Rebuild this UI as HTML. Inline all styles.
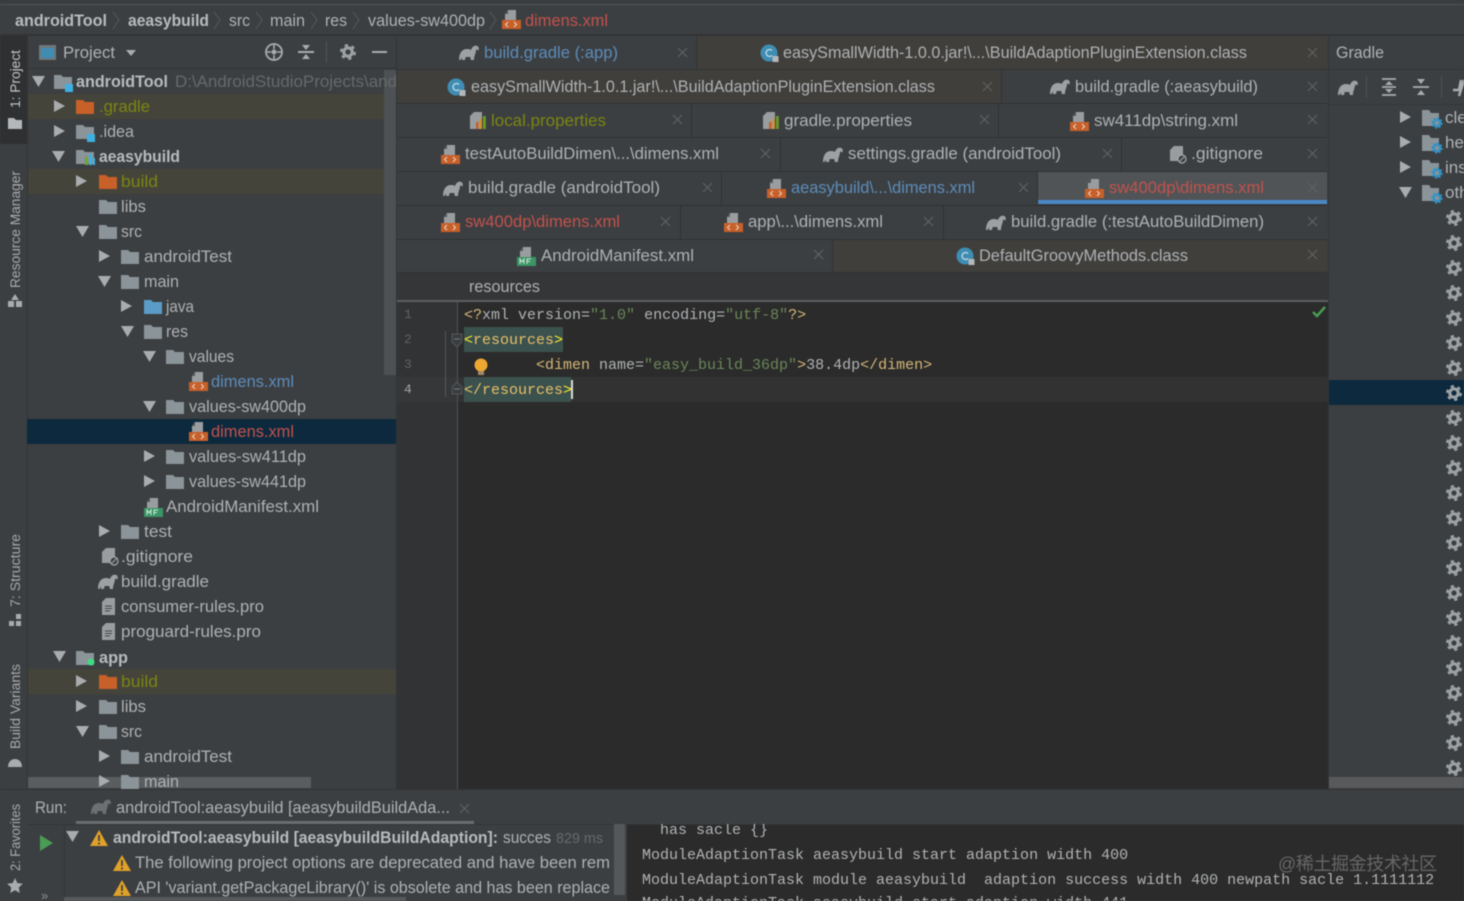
<!DOCTYPE html>
<html lang="en"><head><meta charset="utf-8"><title>Android Studio</title>
<style>
html,body{margin:0;padding:0;background:#3c3f41;width:1464px;height:901px;overflow:hidden}
svg{display:block;filter:blur(.4px)}
text{font-family:"Liberation Sans","Noto Sans CJK SC",sans-serif;font-size:17px;fill:#aeb1b3}
.b{font-weight:bold;fill:#b8bbbd}
.o{fill:#7a8612}.r{fill:#c2524d}.bl{fill:#5c8cba}.d{fill:#66696b}
.m{font-family:"Liberation Mono",monospace;font-size:15px;fill:#b0b2b4}
.v{font-size:13.5px;fill:#a6a9ab}
.n{font-family:"Liberation Mono",monospace;font-size:13px;fill:#5f6264}
</style></head><body>
<svg width="1464" height="901" viewBox="0 0 1464 901" xmlns="http://www.w3.org/2000/svg">
<defs>
<g id="fo"><path d="M0 1h7l2 2h9v12H0z"/></g>
<g id="ar"><path d="M0 0l11 6-11 6z" fill="#a9acae"/></g>
<g id="ad"><path d="M0 0h13l-6.500 11z" fill="#a9acae"/></g>
<g id="el"><path d="M0 15C0 8 3 4 8 4c2 0 3 .4 4 1 1-3 3-4.500 5.500-4.300C19.500 1 20.300 3 19.500 5.500L18 4.500c-.8 0-1 1-1.300 2.500-.4 2.500-1.700 4-1.700 8h-3.200l-.5-3H6.700L6 15H3l-.3-2.500L1.500 15z" fill="#9da1a4"/></g>
<g id="xm"><path d="M6 0h8v10H3V4z" fill="#9a9d9f"/><path d="M6 0v4H3z" fill="#55585a"/><rect x="0" y="10" width="19" height="9" fill="#c8602a"/><path d="M6 12l-2.500 2.500L6 17M12 12l2.500 2.500L12 17" fill="none" stroke="#e9d8c8" stroke-width="1"/></g>
<g id="mf"><path d="M6 0h8v10H3V4z" fill="#9a9d9f"/><path d="M6 0v4H3z" fill="#55585a"/><rect x="0" y="10" width="19" height="9" fill="#3b9566"/><path d="M3 17v-5l2 3 2-3v5M10 17v-5h4M10 14.500h3" fill="none" stroke="#cfe6d8" stroke-width="1"/></g>
<g id="cl"><circle cx="9" cy="9" r="8.500" fill="#3f8db3"/><path d="M12 6.500a3.500 3.500 0 1 0 0 5" fill="none" stroke="#c4dbe6" stroke-width="1.300"/><rect x="12.500" y="12" width="6" height="6" fill="#b5b8ba"/></g>
<g id="pr"><path d="M4 0h8v17H0V4z" fill="#9a9d9f"/><rect x="6" y="10" width="2.500" height="7" fill="#c8602a"/><rect x="9.500" y="7" width="2.500" height="10" fill="#d0902f"/><rect x="13" y="4" width="2.800" height="13" fill="#6e9a2a"/></g>
<g id="gi"><path d="M4 0h9v15H0V4z" fill="#9a9d9f"/><circle cx="12" cy="13" r="4" fill="#3c3f41" stroke="#a5a8aa" stroke-width="1.200"/><path d="M9.500 15.500l5-5" stroke="#a5a8aa"/></g>
<g id="tx"><path d="M4 0h9v17H0V4z" fill="#9a9d9f"/><path d="M3 8h7M3 10.500h7M3 13h5" stroke="#45484a"/></g>
<g id="x"><path d="M0 0l9 9M9 0l-9 9" stroke="#5e6264" stroke-width="1.200" fill="none"/></g>
<g id="ge"><circle cx="8" cy="8" r="4.200" fill="none" stroke="#9ca1a4" stroke-width="3.200"/><circle cx="8" cy="8" r="6.800" fill="none" stroke="#9ca1a4" stroke-width="2.400" stroke-dasharray="3.300 3.820"/></g>
<g id="fg"><path d="M0 0h7l2 3h8v13H0z" fill="#8a9499"/><circle cx="15" cy="13" r="3.300" fill="none" stroke="#3592c4" stroke-width="2.400"/><circle cx="15" cy="13" r="5" fill="none" stroke="#3592c4" stroke-width="1.400" stroke-dasharray="2 1.900"/></g>
<g id="wa"><path d="M9 0l9 16H0z" fill="#dfa129"/><path d="M9 5v6M9 12.500v2" stroke="#3c3f41" stroke-width="1.700"/></g>
<clipPath id="treeclip"><rect x="27" y="70" width="369" height="719"/></clipPath>
<clipPath id="c3"><rect x="64" y="825" width="546" height="76"/></clipPath>
<clipPath id="c4"><rect x="627" y="824" width="837" height="77"/></clipPath>
</defs>

<!-- base -->
<rect width="1464" height="901" fill="#3c3f41"/>
<rect y="0" width="1464" height="4" fill="#3a3c3e"/><rect y="4" width="1464" height="1" fill="#515457"/>
<rect y="34" width="1464" height="2" fill="#323436"/>

<!-- breadcrumb -->
<text class="b" x="15" y="26" textLength="92" lengthAdjust="spacingAndGlyphs">androidTool</text>
<path d="M113 12l6 8-6 9" fill="none" stroke="#56595b"/>
<text class="b" x="128" y="26" textLength="81" lengthAdjust="spacingAndGlyphs">aeasybuild</text>
<path d="M214 12l6 8-6 9" fill="none" stroke="#56595b"/>
<text x="229" y="26" textLength="21" lengthAdjust="spacingAndGlyphs">src</text>
<path d="M256 12l6 8-6 9" fill="none" stroke="#56595b"/>
<text x="270" y="26" textLength="35" lengthAdjust="spacingAndGlyphs">main</text>
<path d="M311 12l6 8-6 9" fill="none" stroke="#56595b"/>
<text x="325" y="26" textLength="22" lengthAdjust="spacingAndGlyphs">res</text>
<path d="M353 12l6 8-6 9" fill="none" stroke="#56595b"/>
<text x="368" y="26" textLength="117" lengthAdjust="spacingAndGlyphs">values-sw400dp</text>
<path d="M490 12l6 8-6 9" fill="none" stroke="#56595b"/>
<use href="#xm" x="502" y="10"/>
<text class="r" x="525" y="26" textLength="83" lengthAdjust="spacingAndGlyphs">dimens.xml</text>

<!-- left tool strip -->
<rect x="0" y="36" width="27" height="108" fill="#2e3032"/>
<rect x="27" y="36" width="1" height="754" fill="#333537"/>
<text class="v" transform="translate(20,108) rotate(-90)" textLength="58" lengthAdjust="spacingAndGlyphs" style="fill:#c4c6c8">1: Project</text>
<path d="M8 118h6l2 2h6v9H8z" fill="#b5b8ba"/>
<text class="v" transform="translate(20,288) rotate(-90)" textLength="117" lengthAdjust="spacingAndGlyphs">Resource Manager</text>
<path d="M15 294l4 6h-8zM8 301h6v6H8zM16 301h6v6h-6z" fill="#a9acae"/>
<text class="v" transform="translate(20,607) rotate(-90)" textLength="73" lengthAdjust="spacingAndGlyphs">7: Structure</text>
<path d="M16 614h5v5h-5zM9 621h5v5H9zM16 621h5v5h-5z" fill="#a9acae"/>
<text class="v" transform="translate(20,749) rotate(-90)" textLength="85" lengthAdjust="spacingAndGlyphs">Build Variants</text>
<path d="M8 767c0-5 3-8 7-8s7 3 7 8z" fill="#a9acae"/>
<text class="v" transform="translate(20,871) rotate(-90)" textLength="67" lengthAdjust="spacingAndGlyphs">2: Favorites</text>
<path d="M15 878l2.300 5 5.500.7-4 3.800 1 5.500-4.800-2.700-4.800 2.700 1-5.500-4-3.800 5.500-.7z" fill="#a9acae"/>

<!-- project header -->
<rect x="39" y="45" width="17" height="15" fill="#6f7679"/><rect x="41" y="48" width="13" height="10" fill="#3f8db3"/>
<text x="63" y="58" textLength="52" lengthAdjust="spacingAndGlyphs">Project</text>
<path d="M126 50h10l-5 6z" fill="#a9acae"/>
<circle cx="274" cy="52" r="8" fill="none" stroke="#a9acae" stroke-width="1.800"/><circle cx="274" cy="52" r="2.500" fill="#a9acae"/><path d="M274 44v5M274 55v5M266 52h5M277 52h5" stroke="#a9acae" stroke-width="1.600"/>
<path d="M298 52h16" stroke="#a9acae" stroke-width="2"/><path d="M302 45h8l-4 5zM302 59h8l-4-5z" fill="#a9acae"/>
<rect x="326" y="41" width="1" height="22" fill="#505356"/>
<use href="#ge" x="340" y="44"/>
<path d="M372 52h15" stroke="#a9acae" stroke-width="2"/>
<rect x="28" y="68" width="368" height="1" fill="#323436"/>

<!-- project tree -->
<g clip-path="url(#treeclip)">
<rect x="28" y="94" width="368" height="25" fill="#45443a"/>
<rect x="28" y="169" width="368" height="25" fill="#45443a"/>
<rect x="28" y="669" width="368" height="25" fill="#45443a"/>
<rect x="27" y="419" width="369" height="25" fill="#0d293e"/>
<rect x="384" y="70" width="12" height="305" fill="#4e5153"/>

<use href="#ad" x="32" y="76"/>
<use href="#fo" x="54" y="74" fill="#8a9499"/><rect x="65" y="84" width="8" height="8" fill="#3fb1e0"/>
<text class="b" x="76" y="87" textLength="92" lengthAdjust="spacingAndGlyphs">androidTool</text>
<text class="d" x="175" y="87" textLength="222" lengthAdjust="spacingAndGlyphs">D:\AndroidStudioProjects\and</text>

<use href="#ar" x="54" y="100"/><use href="#fo" x="76" y="99" fill="#c8602a"/>
<text class="o" x="99" y="112" textLength="51" lengthAdjust="spacingAndGlyphs">.gradle</text>
<use href="#ar" x="54" y="125"/><use href="#fo" x="76" y="124" fill="#8a9499"/><rect x="87" y="134" width="8" height="8" fill="#3fb1e0"/>
<text x="99" y="137" textLength="35" lengthAdjust="spacingAndGlyphs">.idea</text>
<use href="#ad" x="52" y="151"/><use href="#fo" x="76" y="149" fill="#8a9499"/><path d="M85 157h3v8h-3z" fill="#6fa53a"/><path d="M89 154h3v11h-3z" fill="#3fb1e0"/><path d="M93 158h2v7h-2z" fill="#3fb1e0"/>
<text class="b" x="99" y="162" textLength="81" lengthAdjust="spacingAndGlyphs">aeasybuild</text>
<use href="#ar" x="76" y="175"/><use href="#fo" x="99" y="174" fill="#c8602a"/>
<text class="o" x="121" y="187" textLength="37" lengthAdjust="spacingAndGlyphs">build</text>
<use href="#fo" x="99" y="199" fill="#8a9499"/>
<text x="121" y="212" textLength="25" lengthAdjust="spacingAndGlyphs">libs</text>
<use href="#ad" x="76" y="226"/><use href="#fo" x="99" y="224" fill="#8a9499"/>
<text x="121" y="237" textLength="21" lengthAdjust="spacingAndGlyphs">src</text>
<use href="#ar" x="99" y="250"/><use href="#fo" x="121" y="249" fill="#8a9499"/>
<text x="144" y="262" textLength="88" lengthAdjust="spacingAndGlyphs">androidTest</text>
<use href="#ad" x="98" y="276"/><use href="#fo" x="121" y="274" fill="#8a9499"/>
<text x="144" y="287" textLength="35" lengthAdjust="spacingAndGlyphs">main</text>
<use href="#ar" x="121" y="300"/><use href="#fo" x="144" y="299" fill="#5b9bc8"/>
<text x="166" y="312" textLength="28" lengthAdjust="spacingAndGlyphs">java</text>
<use href="#ad" x="121" y="326"/><use href="#fo" x="144" y="324" fill="#8a9499"/>
<text x="166" y="337" textLength="22" lengthAdjust="spacingAndGlyphs">res</text>
<use href="#ad" x="143" y="351"/><use href="#fo" x="166" y="349" fill="#8a9499"/>
<text x="189" y="362" textLength="45" lengthAdjust="spacingAndGlyphs">values</text>
<use href="#xm" x="189" y="372"/>
<text class="bl" x="211" y="387" textLength="83" lengthAdjust="spacingAndGlyphs">dimens.xml</text>
<use href="#ad" x="143" y="401"/><use href="#fo" x="166" y="399" fill="#8a9499"/>
<text x="189" y="412" textLength="117" lengthAdjust="spacingAndGlyphs">values-sw400dp</text>
<use href="#xm" x="189" y="422"/>
<text class="r" x="211" y="437" textLength="83" lengthAdjust="spacingAndGlyphs">dimens.xml</text>
<use href="#ar" x="144" y="450"/><use href="#fo" x="166" y="449" fill="#8a9499"/>
<text x="189" y="462" textLength="117" lengthAdjust="spacingAndGlyphs">values-sw411dp</text>
<use href="#ar" x="144" y="475"/><use href="#fo" x="166" y="474" fill="#8a9499"/>
<text x="189" y="487" textLength="117" lengthAdjust="spacingAndGlyphs">values-sw441dp</text>
<use href="#mf" x="144" y="498"/>
<text x="166" y="512" textLength="153" lengthAdjust="spacingAndGlyphs">AndroidManifest.xml</text>
<use href="#ar" x="99" y="525"/><use href="#fo" x="121" y="524" fill="#8a9499"/>
<text x="144" y="537" textLength="28" lengthAdjust="spacingAndGlyphs">test</text>
<use href="#gi" x="102" y="548"/>
<text x="121" y="562" textLength="72" lengthAdjust="spacingAndGlyphs">.gitignore</text>
<use href="#el" x="98" y="574"/>
<text x="121" y="587" textLength="88" lengthAdjust="spacingAndGlyphs">build.gradle</text>
<use href="#tx" x="102" y="598"/>
<text x="121" y="612" textLength="143" lengthAdjust="spacingAndGlyphs">consumer-rules.pro</text>
<use href="#tx" x="102" y="623"/>
<text x="121" y="637" textLength="140" lengthAdjust="spacingAndGlyphs">proguard-rules.pro</text>
<use href="#ad" x="53" y="651"/><use href="#fo" x="76" y="650" fill="#8a9499"/><circle cx="91" cy="662" r="3.500" fill="#3ddc84"/>
<text class="b" x="99" y="663" textLength="29" lengthAdjust="spacingAndGlyphs">app</text>
<use href="#ar" x="76" y="675"/><use href="#fo" x="99" y="674" fill="#c8602a"/>
<text class="o" x="121" y="687" textLength="37" lengthAdjust="spacingAndGlyphs">build</text>
<use href="#ar" x="76" y="700"/><use href="#fo" x="99" y="699" fill="#8a9499"/>
<text x="121" y="712" textLength="25" lengthAdjust="spacingAndGlyphs">libs</text>
<use href="#ad" x="76" y="726"/><use href="#fo" x="99" y="724" fill="#8a9499"/>
<text x="121" y="737" textLength="21" lengthAdjust="spacingAndGlyphs">src</text>
<use href="#ar" x="99" y="750"/><use href="#fo" x="121" y="749" fill="#8a9499"/>
<text x="144" y="762" textLength="88" lengthAdjust="spacingAndGlyphs">androidTest</text>
<rect x="28" y="777" width="283" height="11" fill="#5a5d5f"/>
<use href="#ar" x="99" y="775"/><use href="#fo" x="121" y="774" fill="#8a9499"/>
<text x="144" y="787" textLength="35" lengthAdjust="spacingAndGlyphs">main</text>
</g>
<rect x="396" y="36" width="1" height="754" fill="#323436"/>

<!-- tabs backgrounds -->
<rect x="697" y="36" width="630" height="33" fill="#403f3c"/>
<rect x="397" y="70" width="604" height="33" fill="#403f3c"/>
<rect x="833" y="240" width="494" height="32" fill="#403f3c"/>
<rect x="1038" y="172" width="289" height="28" fill="#505456"/>
<rect x="1038" y="200" width="289" height="4" fill="#4a88c7"/>
<g fill="#2f3133">
<rect x="397" y="69" width="930" height="1"/><rect x="397" y="103" width="930" height="1"/><rect x="397" y="137" width="930" height="1"/><rect x="397" y="171" width="930" height="1"/><rect x="397" y="205" width="930" height="1"/><rect x="397" y="239" width="930" height="1"/><rect x="397" y="272" width="930" height="1"/>
<rect x="696" y="36" width="1" height="33"/><rect x="1001" y="70" width="1" height="33"/><rect x="691" y="104" width="1" height="33"/><rect x="998" y="104" width="1" height="33"/><rect x="780" y="138" width="1" height="33"/><rect x="1121" y="138" width="1" height="33"/><rect x="721" y="172" width="1" height="33"/><rect x="1037" y="172" width="1" height="33"/><rect x="680" y="206" width="1" height="33"/><rect x="943" y="206" width="1" height="33"/><rect x="832" y="240" width="1" height="32"/>
</g>

<!-- row 1 -->
<use href="#el" x="459" y="45"/><text class="bl" x="484" y="58" textLength="134" lengthAdjust="spacingAndGlyphs">build.gradle (:app)</text><use href="#x" x="678" y="48"/>
<use href="#cl" x="760" y="44"/><text x="783" y="58" textLength="464" lengthAdjust="spacingAndGlyphs">easySmallWidth-1.0.0.jar!\...\BuildAdaptionPluginExtension.class</text><use href="#x" x="1308" y="48"/>
<!-- row 2 -->
<use href="#cl" x="447" y="78"/><text x="471" y="92" textLength="464" lengthAdjust="spacingAndGlyphs">easySmallWidth-1.0.1.jar!\...\BuildAdaptionPluginExtension.class</text><use href="#x" x="983" y="82"/>
<use href="#el" x="1050" y="79"/><text x="1075" y="92" textLength="183" lengthAdjust="spacingAndGlyphs">build.gradle (:aeasybuild)</text><use href="#x" x="1308" y="82"/>
<!-- row 3 -->
<use href="#pr" x="470" y="112"/><text class="o" x="491" y="126" textLength="115" lengthAdjust="spacingAndGlyphs">local.properties</text><use href="#x" x="673" y="115"/>
<use href="#pr" x="763" y="112"/><text x="784" y="126" textLength="128" lengthAdjust="spacingAndGlyphs">gradle.properties</text><use href="#x" x="980" y="115"/>
<use href="#xm" x="1070" y="112"/><text x="1094" y="126" textLength="144" lengthAdjust="spacingAndGlyphs">sw411dp\string.xml</text><use href="#x" x="1308" y="115"/>
<!-- row 4 -->
<use href="#xm" x="441" y="145"/><text x="465" y="159" textLength="254" lengthAdjust="spacingAndGlyphs">testAutoBuildDimen\...\dimens.xml</text><use href="#x" x="761" y="149"/>
<use href="#el" x="823" y="147"/><text x="848" y="159" textLength="213" lengthAdjust="spacingAndGlyphs">settings.gradle (androidTool)</text><use href="#x" x="1103" y="149"/>
<use href="#gi" x="1170" y="146"/><text x="1191" y="159" textLength="72" lengthAdjust="spacingAndGlyphs">.gitignore</text><use href="#x" x="1308" y="149"/>
<!-- row 5 -->
<use href="#el" x="443" y="181"/><text x="468" y="193" textLength="192" lengthAdjust="spacingAndGlyphs">build.gradle (androidTool)</text><use href="#x" x="703" y="183"/>
<use href="#xm" x="767" y="179"/><text class="bl" x="791" y="193" textLength="184" lengthAdjust="spacingAndGlyphs">aeasybuild\...\dimens.xml</text><use href="#x" x="1019" y="183"/>
<use href="#xm" x="1085" y="179"/><text class="r" x="1109" y="193" textLength="155" lengthAdjust="spacingAndGlyphs">sw400dp\dimens.xml</text><use href="#x" x="1308" y="183"/>
<!-- row 6 -->
<use href="#xm" x="441" y="213"/><text class="r" x="465" y="227" textLength="155" lengthAdjust="spacingAndGlyphs">sw400dp\dimens.xml</text><use href="#x" x="661" y="217"/>
<use href="#xm" x="724" y="213"/><text x="748" y="227" textLength="135" lengthAdjust="spacingAndGlyphs">app\...\dimens.xml</text><use href="#x" x="924" y="217"/>
<use href="#el" x="986" y="215"/><text x="1011" y="227" textLength="253" lengthAdjust="spacingAndGlyphs">build.gradle (:testAutoBuildDimen)</text><use href="#x" x="1308" y="217"/>
<!-- row 7 -->
<use href="#mf" x="517" y="247"/><text x="541" y="261" textLength="153" lengthAdjust="spacingAndGlyphs">AndroidManifest.xml</text><use href="#x" x="814" y="250"/>
<use href="#cl" x="956" y="247"/><text x="979" y="261" textLength="209" lengthAdjust="spacingAndGlyphs">DefaultGroovyMethods.class</text><use href="#x" x="1308" y="250"/>

<!-- editor -->
<rect x="397" y="273" width="931" height="27" fill="#343638"/>
<text x="469" y="292" textLength="71" lengthAdjust="spacingAndGlyphs">resources</text>
<rect x="397" y="300" width="931" height="2" fill="#5c5f61"/>
<rect x="397" y="302" width="931" height="488" fill="#2b2b2b"/>
<rect x="397" y="302" width="60" height="488" fill="#313335"/>
<rect x="457" y="302" width="1" height="488" fill="#505254"/>
<rect x="397" y="377" width="60" height="25" fill="#353739"/>
<rect x="458" y="377" width="870" height="25" fill="#323232"/>
<rect x="464" y="327" width="99" height="25" fill="#3b514d"/>
<rect x="464" y="377" width="107" height="25" fill="#3b514d"/>
<text class="n" x="404" y="318">1</text><text class="n" x="404" y="343">2</text><text class="n" x="404" y="368">3</text><text class="n" x="404" y="393" style="fill:#a4a7a9">4</text>
<text class="m" x="464" y="319"><tspan fill="#d5b778">&lt;?</tspan><tspan fill="#b0b2b4">xml version=</tspan><tspan fill="#6a8759">"1.0"</tspan><tspan fill="#b0b2b4"> encoding=</tspan><tspan fill="#6a8759">"utf-8"</tspan><tspan fill="#d5b778">?&gt;</tspan></text>
<text class="m" x="464" y="344" style="fill:#e8bf6a"><tspan fill="#ffef28">&lt;</tspan>resources<tspan fill="#ffef28">&gt;</tspan></text>
<text class="m" x="536" y="369" style="fill:#d5b778">&lt;dimen<tspan fill="#b0b2b4"> name=</tspan><tspan fill="#6a8759">"easy_build_36dp"</tspan>&gt;<tspan fill="#b0b2b4">38.4dp</tspan>&lt;/dimen&gt;</text>
<text class="m" x="464" y="394" style="fill:#e8bf6a"><tspan fill="#e8bf6a">&lt;/</tspan>resources<tspan fill="#ffef28">&gt;</tspan></text>
<rect x="571" y="380" width="2" height="19" fill="#d8d8d8"/>
<rect x="445" y="331" width="1" height="66" fill="#55585a"/>
<path d="M452 334h10v8l-5 5-5-5z" fill="#3a3d3f" stroke="#55585a"/><path d="M454 339h6" stroke="#777"/>
<path d="M452 394v-7l5-5 5 5v7z" fill="#3a3d3f" stroke="#55585a"/><path d="M454 389h6" stroke="#777"/>
<circle cx="481" cy="365" r="6.500" fill="#f0a732"/><rect x="478" y="371" width="6" height="4" fill="#a08a66"/>
<path d="M1313 312l4 4 8-9" fill="none" stroke="#499c54" stroke-width="2.500"/>
<rect x="1328" y="36" width="1" height="754" fill="#323436"/>

<!-- gradle panel -->
<text x="1336" y="58" textLength="48" lengthAdjust="spacingAndGlyphs">Gradle</text>
<rect x="1329" y="69" width="135" height="1" fill="#343638"/>
<rect x="1329" y="104" width="135" height="1" fill="#343638"/>
<use href="#el" x="1338" y="80" /><rect x="1366" y="76" width="1" height="22" fill="#4f5254"/>
<path d="M1382 79h14M1382 95h14M1382 87h14" stroke="#a9acae" stroke-width="1.800"/><path d="M1389 81l-4 4h8zM1389 93l-4-4h8z" fill="#a9acae"/>
<path d="M1413 87h16" stroke="#a9acae" stroke-width="1.800"/><path d="M1417 79h8l-4 5zM1417 95h8l-4-5z" fill="#a9acae"/>
<rect x="1441" y="76" width="1" height="22" fill="#4f5254"/>
<path d="M1453 90h6l2-10M1464 80l-5 16" fill="none" stroke="#a9acae" stroke-width="2.500"/>
<use href="#ar" x="1400" y="111"/><use href="#fg" x="1422" y="110"/><text x="1445" y="123">clean</text>
<use href="#ar" x="1400" y="136"/><use href="#fg" x="1422" y="135"/><text x="1445" y="148">help</text>
<use href="#ar" x="1400" y="161"/><use href="#fg" x="1422" y="160"/><text x="1445" y="173">install</text>
<use href="#ad" x="1399" y="187"/><use href="#fg" x="1422" y="185"/><text x="1445" y="198">other</text>
<rect x="1329" y="380" width="135" height="25" fill="#0d293e"/>
<use href="#ge" x="1446" y="210"/><use href="#ge" x="1446" y="235"/><use href="#ge" x="1446" y="260"/><use href="#ge" x="1446" y="285"/><use href="#ge" x="1446" y="310"/><use href="#ge" x="1446" y="335"/><use href="#ge" x="1446" y="360"/><use href="#ge" x="1446" y="385"/><use href="#ge" x="1446" y="410"/><use href="#ge" x="1446" y="435"/><use href="#ge" x="1446" y="460"/><use href="#ge" x="1446" y="485"/><use href="#ge" x="1446" y="510"/><use href="#ge" x="1446" y="535"/><use href="#ge" x="1446" y="560"/><use href="#ge" x="1446" y="585"/><use href="#ge" x="1446" y="610"/><use href="#ge" x="1446" y="635"/><use href="#ge" x="1446" y="660"/><use href="#ge" x="1446" y="685"/><use href="#ge" x="1446" y="710"/><use href="#ge" x="1446" y="735"/><use href="#ge" x="1446" y="760"/>
<rect x="1329" y="777" width="135" height="11" fill="#57595b"/>

<!-- run panel -->
<rect x="0" y="789" width="1464" height="1" fill="#323436"/>
<rect x="27" y="790" width="1437" height="34" fill="#3c3f41"/>
<text x="35" y="813" textLength="32" lengthAdjust="spacingAndGlyphs">Run:</text>
<use href="#el" x="91" y="799" opacity=".5"/>
<text x="116" y="813" textLength="334" lengthAdjust="spacingAndGlyphs">androidTool:aeasybuild [aeasybuildBuildAda...</text>
<use href="#x" x="460" y="804"/>
<rect x="76" y="821" width="398" height="3" fill="#6b6e70"/>
<rect x="28" y="824" width="1436" height="1" fill="#323436"/>
<rect x="64" y="825" width="1" height="76" fill="#333537"/>
<path d="M40 835l13 8-13 8z" fill="#499c54"/>
<text x="41" y="900" style="font-size:13px;fill:#8d9092">&#187;</text>
<g clip-path="url(#c3)">
<use href="#ad" x="66" y="831"/>
<use href="#wa" x="90" y="830"/>
<text class="b" x="113" y="843" textLength="385" lengthAdjust="spacingAndGlyphs">androidTool:aeasybuild [aeasybuildBuildAdaption]:</text>
<text x="503" y="843" textLength="48" lengthAdjust="spacingAndGlyphs">succes</text>
<text class="d" x="556" y="843" style="font-size:15px" textLength="47" lengthAdjust="spacingAndGlyphs">829 ms</text>
<use href="#wa" x="113" y="855"/>
<text x="135" y="868" textLength="475" lengthAdjust="spacingAndGlyphs">The following project options are deprecated and have been rem</text>
<use href="#wa" x="113" y="880"/>
<text x="135" y="893" textLength="475" lengthAdjust="spacingAndGlyphs">API 'variant.getPackageLibrary()' is obsolete and has been replace</text>
</g>
<rect x="64" y="897" width="342" height="4" fill="#565a5c"/>
<rect x="614" y="824" width="11" height="71" fill="#55585a"/>
<rect x="627" y="825" width="837" height="76" fill="#2b2b2b"/>
<g clip-path="url(#c4)">
<text class="m" x="642" y="834" xml:space="preserve">  has sacle {}</text>
<text class="m" x="642" y="859">ModuleAdaptionTask aeasybuild start adaption width 400</text>
<text class="m" x="642" y="884" xml:space="preserve">ModuleAdaptionTask module aeasybuild  adaption success width 400 newpath sacle 1.1111112</text>
<text class="m" x="642" y="907">ModuleAdaptionTask aeasybuild start adaption width 441</text>
</g>
<text x="1278" y="870" textLength="159" style="font-size:18px;fill:#ffffff;fill-opacity:.28">@稀土掘金技术社区</text>
</svg>
</body></html>
